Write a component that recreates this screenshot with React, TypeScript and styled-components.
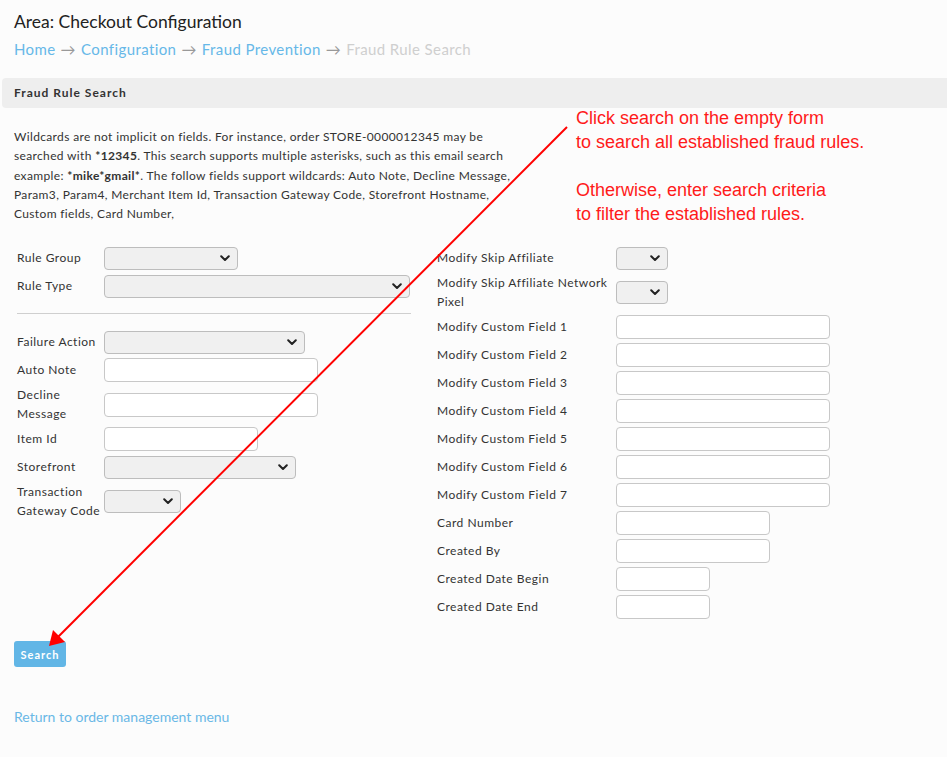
import React from "react";
import styled, { createGlobalStyle } from "styled-components";

const GlobalStyle = createGlobalStyle`
  html, body { margin: 0; padding: 0; background: #fcfcfc; }
  body { font-family: Lato, "Open Sans", sans-serif; color: #333; }
  * { box-sizing: border-box; }
`;

const Page = styled.div`
  position: relative;
  width: 947px;
  min-height: 757px;
  overflow: hidden;
`;

const Top = styled.header`
  padding: 11px 14px 0;
`;

const Title = styled.h1`
  margin: 0;
  font-size: 17.5px;
  line-height: 22px;
  font-weight: 400;
  color: #222;
`;

const Crumbs = styled.nav`
  margin-top: 6px;
  font-size: 15px;
  line-height: 20px;
  letter-spacing: 0.4px;
  display: flex;
  gap: 5px;
`;

const Crumb = styled.a<{ $current?: boolean }>`
  color: ${(p) => (p.$current ? "#cfcfcf" : "#66b8e8")};
  text-decoration: none;
`;

const Sep = styled.span`
  color: #999;
`;

const Panel = styled.section`
  margin-top: 19px;
`;

const PanelHeader = styled.div`
  margin-left: 2px;
  height: 30px;
  line-height: 30px;
  padding-left: 12px;
  background: #eeeeee;
  border-radius: 4px 0 0 4px;
  font-size: 12px;
  font-weight: 700;
  letter-spacing: 1px;
  color: #333;
`;

const PanelBody = styled.div`
  padding: 0 14px;
`;

const Intro = styled.p`
  margin: 19px 0 0;
  width: 505px;
  font-size: 12px;
  line-height: 19.25px;
  letter-spacing: 0.35px;
  color: #333;
`;

const FormGrid = styled.div`
  margin-top: 21px;
  padding-left: 3px;
  display: grid;
  grid-template-columns: 394px 1fr;
  column-gap: 26px;
  align-items: start;
`;

const Column = styled.div`
  display: flex;
  flex-direction: column;
`;

const Row = styled.div<{ $label: number }>`
  display: grid;
  grid-template-columns: ${(p) => p.$label}px 1fr;
  align-items: center;
  padding: 2px 0;
  min-height: 28px;
`;

const Label = styled.label`
  font-size: 12px;
  line-height: 18.5px;
  letter-spacing: 0.5px;
  color: #333;
`;

const Divider = styled.hr`
  margin: 13px 0 14px;
  border: 0;
  border-top: 1px solid #cfcfcf;
  width: 394px;
`;

const TextInput = styled.input<{ $w: number }>`
  width: ${(p) => p.$w}px;
  height: 24px;
  border: 1px solid #c8c8c8;
  border-radius: 4px;
  background: #fff;
  padding: 0 4px;
  font: inherit;
  font-size: 12px;
`;

const SelectWrap = styled.div<{ $w: number }>`
  position: relative;
  width: ${(p) => p.$w}px;
  height: 23px;
`;

const Select = styled.select`
  appearance: none;
  -webkit-appearance: none;
  width: 100%;
  height: 100%;
  border: 1px solid #bdbdbd;
  border-radius: 4px;
  background: #f0f0f0;
  font: inherit;
  font-size: 12px;
`;

const Chevron = styled.svg`
  position: absolute;
  right: 8px;
  top: 8px;
  width: 10px;
  height: 7px;
  pointer-events: none;
`;

const Button = styled.button`
  margin-top: 20px;
  height: 26px;
  width: 52px;
  padding: 0;
  border: 0;
  border-radius: 3px;
  background: #62b6e6;
  color: #fff;
  font-family: Lato, sans-serif;
  font-weight: 700;
  font-size: 11px;
  letter-spacing: 1px;
  display: block;
`;

const BackLink = styled.a`
  display: block;
  margin-top: 41px;
  font-size: 14px;
  line-height: 17px;
  color: #6ab8e6;
  text-decoration: none;
`;

const Note = styled.div`
  position: absolute;
  left: 576px;
  top: 106px;
  font-family: "Liberation Sans", Arial, sans-serif;
  font-size: 18px;
  line-height: 24px;
  color: #ff1a1a;
`;

const NoteGap = styled.div`
  height: 24px;
`;

const Overlay = styled.svg`
  position: absolute;
  left: 0;
  top: 0;
  pointer-events: none;
`;

const Sel = ({ w }: { w: number }) => (
  <SelectWrap $w={w}>
    <Select defaultValue="">
      <option value=""></option>
    </Select>
    <Chevron viewBox="0 0 10 7">
      <path d="M1.2 1.2 L5 5 L8.8 1.2" fill="none" stroke="#222" strokeWidth="2" strokeLinecap="round" strokeLinejoin="round" />
    </Chevron>
  </SelectWrap>
);

const L = 87;
const R = 179;

export default function App() {
  return (
    <Page>
      <GlobalStyle />
      <Top>
        <Title>Area: Checkout Configuration</Title>
        <Crumbs>
          <Crumb href="#">Home</Crumb>
          <Sep>→</Sep>
          <Crumb href="#">Configuration</Crumb>
          <Sep>→</Sep>
          <Crumb href="#">Fraud Prevention</Crumb>
          <Sep>→</Sep>
          <Crumb $current>Fraud Rule Search</Crumb>
        </Crumbs>
      </Top>
      <Panel>
        <PanelHeader>Fraud Rule Search</PanelHeader>
        <PanelBody>
          <Intro>
            Wildcards are not implicit on fields. For instance, order STORE-0000012345 may be searched with <b>*12345</b>. This
            search supports multiple asterisks, such as this email search example: <b>*mike*gmail*</b>. The follow fields support
            wildcards: Auto Note, Decline Message, Param3, Param4, Merchant Item Id, Transaction Gateway Code, Storefront Hostname,
            Custom fields, Card Number,
          </Intro>
          <FormGrid>
            <Column>
              <Row $label={L}><Label>Rule Group</Label><Sel w={134} /></Row>
              <Row $label={L}><Label>Rule Type</Label><Sel w={306} /></Row>
              <Divider />
              <Row $label={L}><Label>Failure Action</Label><Sel w={201} /></Row>
              <Row $label={L}><Label>Auto Note</Label><TextInput $w={214} /></Row>
              <Row $label={L}><Label>Decline<br />Message</Label><TextInput $w={214} /></Row>
              <Row $label={L}><Label>Item Id</Label><TextInput $w={154} /></Row>
              <Row $label={L}><Label>Storefront</Label><Sel w={192} /></Row>
              <Row $label={L}><Label>Transaction<br />Gateway Code</Label><Sel w={77} /></Row>
            </Column>
            <Column>
              <Row $label={R}><Label>Modify Skip Affiliate</Label><Sel w={52} /></Row>
              <Row $label={R}><Label>Modify Skip Affiliate Network<br />Pixel</Label><Sel w={52} /></Row>
              {[1, 2, 3, 4, 5, 6, 7].map((n) => (
                <Row $label={R} key={n}><Label>Modify Custom Field {n}</Label><TextInput $w={214} /></Row>
              ))}
              <Row $label={R}><Label>Card Number</Label><TextInput $w={154} /></Row>
              <Row $label={R}><Label>Created By</Label><TextInput $w={154} /></Row>
              <Row $label={R}><Label>Created Date Begin</Label><TextInput $w={94} /></Row>
              <Row $label={R}><Label>Created Date End</Label><TextInput $w={94} /></Row>
            </Column>
          </FormGrid>
          <Button>Search</Button>
          <BackLink href="#">Return to order management menu</BackLink>
        </PanelBody>
      </Panel>
      <Note>
        Click search on the empty form
        <br />
        to search all established fraud rules.
        <NoteGap />
        Otherwise, enter search criteria
        <br />
        to filter the established rules.
      </Note>
      <Overlay width="947" height="757" viewBox="0 0 947 757">
        <line x1="567" y1="127" x2="56" y2="639" stroke="#ff0000" strokeWidth="2" />
        <polygon points="49,646 53,630 65,642" fill="#ff0000" />
      </Overlay>
    </Page>
  );
}
